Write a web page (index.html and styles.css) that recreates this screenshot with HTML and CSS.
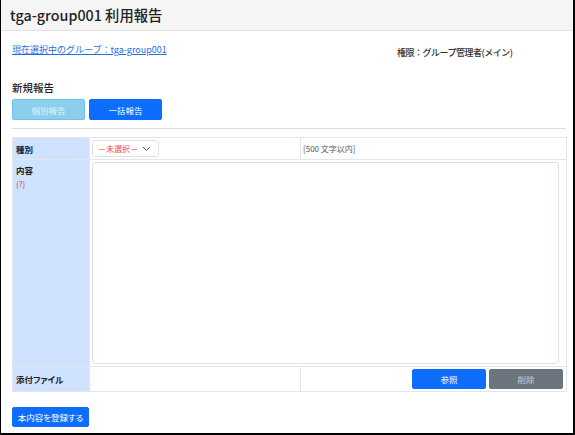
FILE: index.html
```html
<!DOCTYPE html>
<html lang="ja">
<head>
<meta charset="utf-8">
<title>tga-group001 利用報告</title>
<link rel="stylesheet" href="styles.css">
</head>
<body>
<div class="frame">
  <header class="page-header">
    <h1 class="page-title">tga-group001 利用報告</h1>
  </header>
  <main class="content">
    <div class="info-row">
      <a class="group-link" href="#">現在選択中のグループ：tga-group001</a>
      <span class="role">権限：グループ管理者(メイン)</span>
    </div>
    <h2 class="section-title">新規報告</h2>
    <div class="tabs">
      <button class="btn btn-light-blue">個別報告</button>
      <button class="btn btn-primary">一括報告</button>
    </div>
    <hr class="divider">
    <table class="form-table">
      <colgroup>
        <col class="col-label">
        <col class="col-field">
        <col class="col-extra">
      </colgroup>
      <tr class="row-type">
        <th>種別</th>
        <td>
          <div class="select">
            <span class="select-text">－未選択－</span>
            <svg class="chevron" width="9" height="6" viewBox="0 0 9 6"><path d="M1 1 L4.5 4.5 L8 1" fill="none" stroke="#4a4f55" stroke-width="1"/></svg>
          </div>
        </td>
        <td class="note">[500 文字以内]</td>
      </tr>
      <tr class="row-content">
        <th>内容<br><span class="help">(?)</span></th>
        <td colspan="2"><textarea class="textarea"></textarea></td>
      </tr>
      <tr class="row-file">
        <th>添付ファイル</th>
        <td></td>
        <td>
          <div class="file-actions">
            <button class="btn btn-primary btn-file">参照</button>
            <button class="btn btn-secondary btn-file">削除</button>
          </div>
        </td>
      </tr>
    </table>
    <button class="btn btn-primary btn-submit">本内容を登録する</button>
  </main>
</div>
</body>
</html>
```

FILE: styles.css
```css
* { box-sizing: border-box; }
html, body { margin: 0; padding: 0; background: #fff; }
body {
  font-family: "Noto Sans CJK JP", "Noto Sans", sans-serif;
  font-feature-settings: "palt";
  color: #212529;
}
.frame {
  width: 575px;
  height: 435px;
  border-left: 1px solid #000;
  border-right: 2px solid #000;
  border-bottom: 2px solid #000;
  overflow: hidden;
}
.page-header {
  height: 31px;
  background: #f5f5f5;
  border-bottom: 1px solid #e2e2e2;
  padding-left: 9px;
}
.page-title {
  margin: 0;
  font-size: 14.3px;
  font-weight: 500;
  line-height: 30px;
  color: #222;
}
.content {
  padding: 0 7px 0 11px;
}
.info-row {
  display: grid;
  grid-template-columns: 385px auto;
  margin-top: 12px;
  height: 14px;
}
.group-link {
  font-size: 9px;
  line-height: 14px;
  color: #1f6fe0;
  text-decoration: underline;
  font-feature-settings: "palt" 0;
  letter-spacing: 0;
}
.role {
  font-size: 9px;
  line-height: 14px;
  margin-top: 3px;
  font-weight: 500;
  color: #333;
  font-feature-settings: "palt" 0;
  letter-spacing: -0.5px;
}
.section-title {
  margin: 23px 0 3px 0;
  font-size: 10.5px;
  font-weight: 500;
  line-height: 16px;
  color: #222;
}
.tabs {
  display: flex;
  gap: 4px;
}
.btn {
  font-family: inherit;
  font-feature-settings: "palt";
  font-size: 8.5px;
  border-radius: 2px;
  border: 1px solid transparent;
  padding: 0;
  cursor: pointer;
}
.tabs .btn {
  width: 73px;
  height: 21px;
}
.btn-light-blue {
  background: #8bcfec;
  border-color: #6ec2e6;
  color: #e2f2fa;
}
.btn-primary {
  background: #0d6efd;
  border-color: #0d6efd;
  color: #fff;
}
.btn-secondary {
  background: #6c757d;
  border-color: #6c757d;
  color: #c9cdd1;
}
.divider {
  border: 0;
  border-top: 1px solid #dcdcdc;
  margin: 8px 0 8px 0;
}
.form-table {
  width: 554px;
  border-collapse: collapse;
  table-layout: fixed;
}
.col-label { width: 77px; }
.col-field { width: 211px; }
.col-extra { width: 266px; }
.form-table th,
.form-table td {
  border: 1px solid #e3e6ea;
  padding: 2px;
  font-size: 8.5px;
  vertical-align: top;
}
.form-table th {
  background: #cfe2ff;
  text-align: left;
  font-weight: 600;
  padding: 3px 3px;
  color: #222;
}
.row-type th { vertical-align: middle; }
.row-type td { height: 22px; vertical-align: middle; }
.select {
  width: 67px;
  height: 17px;
  border: 1px solid #dfe2e6;
  border-radius: 3px;
  display: flex;
  align-items: center;
  justify-content: space-between;
  padding: 0 7px 0 5px;
  background: #fff;
}
.select-text {
  color: #f04a4a;
  font-size: 8px;
}
.note {
  color: #555;
  font-size: 8px !important;
}
.row-content th { line-height: 13px; padding-top: 4px; }
.help {
  color: #d9363e;
  font-weight: 400;
  font-size: 8px;
}
.textarea {
  display: block;
  width: 467px;
  height: 202px;
  border: 1px solid #dfe2e6;
  border-radius: 3px;
  resize: none;
  margin: 0;
}
.row-file th { vertical-align: middle; }
.file-actions {
  display: flex;
  justify-content: flex-end;
  gap: 3px;
  padding-right: 1px;
}
.btn-file {
  width: 74px;
  height: 20px;
}
.btn-submit {
  margin-top: 15px;
  width: 77px;
  height: 20px;
  font-size: 8.5px;
}
```
